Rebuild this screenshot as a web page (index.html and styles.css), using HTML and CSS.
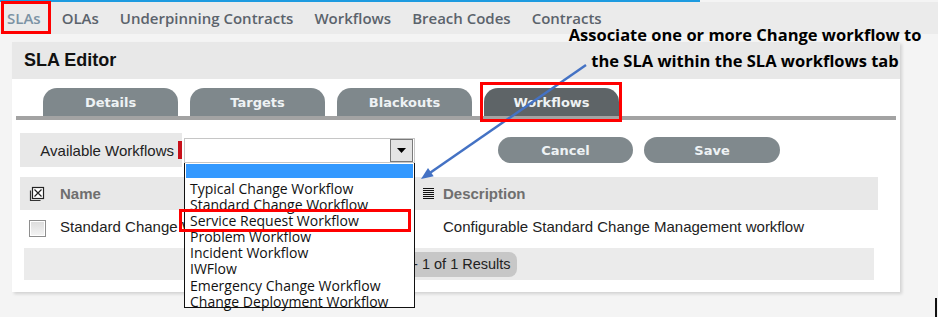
FILE: index.html
```html
<!DOCTYPE html>
<html>
<head>
<meta charset="utf-8">
<link rel="stylesheet" href="styles.css">
</head>
<body>
<div class="topline"></div>
<nav class="nav">
  <span class="nav-item active">SLAs</span>
  <span class="nav-item">OLAs</span>
  <span class="nav-item">Underpinning Contracts</span>
  <span class="nav-item">Workflows</span>
  <span class="nav-item">Breach Codes</span>
  <span class="nav-item">Contracts</span>
</nav>
<main class="panel">
  <div class="panel-head">SLA Editor</div>
  <div class="tabs">
    <div class="tab">Details</div>
    <div class="tab">Targets</div>
    <div class="tab">Blackouts</div>
    <div class="tab active">Workflows</div>
  </div>
  <div class="form-row">
    <div class="field-label">Available Workflows<span class="req"></span></div>
    <div class="select">
      <span class="select-arrow"><svg width="9" height="5" viewBox="0 0 9 5"><polygon points="0,0 9,0 4.5,5" fill="#000"/></svg></span>
    </div>
    <button class="btn btn-cancel">Cancel</button>
    <button class="btn btn-save">Save</button>
  </div>
  <div class="thead">
    <span class="col-check">
      <svg width="16" height="16" viewBox="0 0 16 16"><path d="M1.5 4.5v10h10" fill="none" stroke="#333" stroke-width="1.2"/><rect x="3.5" y="1.5" width="11" height="11" fill="#fff" stroke="#222" stroke-width="1.2"/><path d="M5.5 3.5l7 7M12.5 3.5l-7 7" stroke="#222" stroke-width="1.2"/></svg>
    </span>
    <span class="col-name">Name</span>
    <span class="col-desc">
      <svg class="list-icon" width="11" height="13" viewBox="0 0 11 13"><path d="M0 1.5h11M0 3.5h11M0 5.5h11M0 7.5h11M0 9.5h11M0 11.5h11" stroke="#111" stroke-width="1.1"/></svg>
      Description
    </span>
  </div>
  <div class="trow">
    <span class="col-check"><span class="checkbox"></span></span>
    <span class="col-name">Standard Change Workflow</span>
    <span class="col-desc">Configurable Standard Change Management workflow</span>
  </div>
  <div class="pager"><span class="results">1 - 1 of 1 Results</span></div>
</main>

<ul class="dropdown">
  <li class="dd-selected"></li>
  <li>Typical Change Workflow</li>
  <li>Standard Change Workflow</li>
  <li class="dd-over">Service Request Workflow</li>
  <li>Problem Workflow</li>
  <li>Incident Workflow</li>
  <li>IWFlow</li>
  <li>Emergency Change Workflow</li>
  <li>Change Deployment Workflow</li>
</ul>

<div class="callout">Associate one or more Change workflow to<br>the SLA within the SLA workflows tab</div>
<svg class="arrow" width="938" height="317" viewBox="0 0 938 317">
  <line x1="586" y1="65" x2="430.5" y2="172.5" stroke="#4472c4" stroke-width="2.5"/>
  <polygon points="421,179 433.7,176.3 428,168.1" fill="#4472c4"/>
</svg>

<div class="hl hl-slas"></div>
<div class="hl hl-tab"></div>
<div class="hl hl-item"></div>
<div class="edge-mark"></div>
</body>
</html>
```

FILE: styles.css
```css
* { box-sizing: border-box; }

body {
  margin: 0;
  width: 938px;
  height: 317px;
  overflow: hidden;
  position: relative;
  background: #f4f4f4;
  font-family: "Liberation Sans", Arial, sans-serif;
  color: #222;
}

.topline {
  height: 2px;
  width: 700px;
  background: #1d9be0;
}

.nav {
  height: 32px;
  background: #ebebeb;
  display: flex;
  align-items: center;
  gap: 21px;
  padding-left: 7px;
  font-family: "Open Sans", sans-serif;
  font-weight: 600;
  font-size: 15px;
  color: #5b636c;
}

.nav-item.active { color: #7b92a4; }

.panel {
  margin: 8px 0 0 12px;
  width: 888px;
  height: 250px;
  background: #fff;
  box-shadow: 2px 2px 3px rgba(0, 0, 0, 0.14);
  display: flex;
  flex-direction: column;
}

.panel-head {
  height: 37px;
  background: #e8e8e8;
  padding-left: 12px;
  display: flex;
  align-items: center;
  font-weight: bold;
  font-size: 18px;
  color: #111;
}

.tabs {
  margin: 9px 4px 0 4px;
  padding-left: 27px;
  display: flex;
  gap: 12px;
  border-bottom: 4px solid #a3a3a3;
}

.tab {
  width: 135px;
  height: 28px;
  border-radius: 14px 14px 0 0;
  background: #7f888c;
  color: #eef2f4;
  font-family: "DejaVu Sans", sans-serif;
  font-weight: bold;
  font-size: 13px;
  display: flex;
  align-items: center;
  justify-content: center;
}

.tab.active { background: #5e6467; }

.form-row {
  margin: 13px 0 0 8px;
  display: flex;
  align-items: center;
}

.field-label {
  width: 162px;
  height: 34px;
  background: #e8e8e8;
  display: flex;
  align-items: center;
  justify-content: flex-end;
  font-size: 15px;
  color: #222;
}

.req {
  width: 4px;
  height: 18px;
  margin-left: 4px;
  background: #c8101a;
}

.select {
  margin-left: 2px;
  width: 231px;
  height: 25px;
  border: 1px solid #c6c6c6;
  background: #fff;
  display: flex;
  justify-content: flex-end;
  align-items: center;
  padding-right: 1px;
}

.select-arrow {
  width: 23px;
  height: 23px;
  border: 1px solid #7a7a7a;
  background: #e4e4e4;
  display: flex;
  align-items: center;
  justify-content: center;
}

.btn {
  height: 26px;
  border: none;
  border-radius: 13px;
  background: #80898d;
  color: #eef2f4;
  font-family: "DejaVu Sans", sans-serif;
  font-weight: bold;
  font-size: 13px;
  padding: 0;
}

.btn-cancel { width: 135px; margin-left: 83px; }
.btn-save { width: 136px; margin-left: 11px; }

.thead, .trow {
  margin-left: 8px;
  width: 858px;
  display: flex;
  align-items: center;
  font-size: 15px;
}

.thead {
  margin-top: 10px;
  height: 33px;
  background: #e8e8e8;
  font-weight: bold;
  color: #6f6f6f;
}

.trow {
  height: 36px;
  color: #222;
}

.col-check {
  width: 40px;
  padding-left: 9px;
  display: flex;
  align-items: center;
}

.col-name { width: 363px; }

.col-desc {
  display: flex;
  align-items: center;
}

.list-icon { margin-right: 9px; }
.trow .col-desc { padding-left: 20px; }
.trow .col-name { position: relative; top: -2px; }
.trow .col-desc { position: relative; top: -2px; }

.checkbox {
  width: 17px;
  height: 17px;
  border: 1px solid #8e8e8e;
  background: linear-gradient(#dcdcdc, #f4f4f4);
  box-shadow: inset 0 0 0 1px #fff;
}

.pager {
  margin: 2px 0 0 12px;
  width: 850px;
  height: 32px;
  background: #ebebeb;
  display: flex;
  align-items: center;
}

.results {
  margin-left: 369px;
  height: 25px;
  padding: 0 6px 0 8px;
  border-radius: 8px;
  background: #c7c7c7;
  display: flex;
  align-items: center;
  font-size: 14.5px;
  color: #222;
}

.dropdown {
  position: absolute;
  left: 184px;
  top: 163px;
  width: 231px;
  height: 145px;
  margin: 0;
  padding: 0;
  list-style: none;
  background: #fff;
  border: 1px solid #111;
  border-top: none;
  font-family: "Open Sans", sans-serif;
  font-size: 14px;
  color: #111;
}

.dropdown li {
  height: 16.1px;
  line-height: 16.1px;
  padding-left: 5px;
  white-space: nowrap;
}

.dropdown li.dd-selected {
  height: 14px;
  margin: 1px 1px 3px 1px;
  background: #3399ff;
}

.callout {
  position: absolute;
  left: 555px;
  top: 22px;
  width: 380px;
  text-align: center;
  font-family: "Open Sans", sans-serif;
  font-weight: bold;
  font-size: 16.5px;
  line-height: 26px;
  color: #000;
}

.arrow {
  position: absolute;
  left: 0;
  top: 0;
  pointer-events: none;
}

.hl {
  position: absolute;
  border: 3px solid #f00;
}

.hl-slas { left: 1px; top: 1px; width: 50px; height: 33px; }
.hl-tab { left: 480px; top: 82px; width: 142px; height: 40px; }
.hl-item { left: 179px; top: 209px; width: 232px; height: 23px; }

.edge-mark {
  position: absolute;
  left: 935px;
  top: 298px;
  width: 2px;
  height: 19px;
  background: #111;
}
```
